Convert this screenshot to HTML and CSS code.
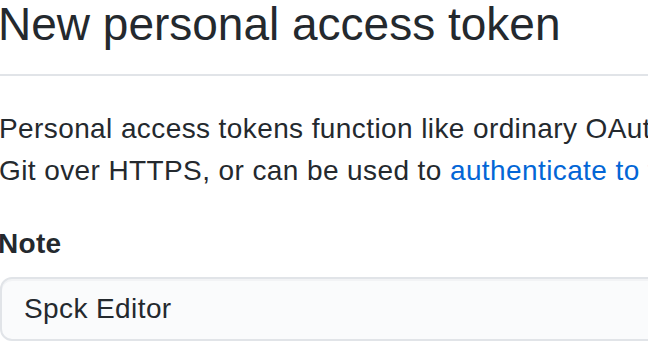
FILE: index.html
```html
<!DOCTYPE html>
<html lang="en">
<head>
<meta charset="utf-8">
<title>New personal access token</title>
<link rel="stylesheet" href="styles.css">
</head>
<body>
<main class="page">
  <div class="subhead">
    <h1 class="subhead-heading">New personal access token</h1>
  </div>
  <p class="intro">Personal access tokens function like ordinary OAuth access tokens. They can be used instead of a password for Git over HTTPS, or can be used to <a href="#" class="link">authenticate to the API over Basic Authentication</a>.</p>
  <div class="form-group">
    <label class="form-label" for="note">Note</label>
    <input class="form-control" id="note" type="text" value="Spck Editor">
  </div>
</main>
</body>
</html>
```
FILE: styles.css
```css
html, body {
  margin: 0;
  padding: 0;
  background: #ffffff;
  overflow: hidden;
}
body {
  font-family: "Liberation Sans", Arial, sans-serif;
  color: #24292e;
}
.page {
  width: 1460px;
}
.subhead {
  padding-bottom: 26px;
  border-bottom: 2px solid #e1e4e8;
}
.subhead-heading {
  margin: 0 0 0 -2px;
  font-size: 46px;
  font-weight: 400;
  line-height: 48px;
}
.intro {
  margin: 32px 0 0 -1px;
  width: 1450px;
  font-size: 28px;
  line-height: 42px;
  letter-spacing: 0.4px;
}
.link {
  color: #0366d6;
  text-decoration: none;
}
.form-group {
  margin-top: 36px;
  display: flex;
  flex-direction: column;
  align-items: flex-start;
}
.form-label {
  margin-left: -2px;
  font-size: 28px;
  font-weight: 700;
  line-height: 32px;
  letter-spacing: 0.3px;
}
.form-control {
  margin-top: 17px;
  box-sizing: border-box;
  width: 1000px;
  height: 64px;
  padding: 0 22px;
  font-family: "Liberation Sans", Arial, sans-serif;
  font-size: 28px;
  letter-spacing: 0.4px;
  color: #24292e;
  background: #fafbfc;
  border: 2px solid #e1e4e8;
  border-radius: 12px;
  box-shadow: inset 0 2px 0 rgba(225, 228, 232, 0.35);
  outline: none;
}
```
